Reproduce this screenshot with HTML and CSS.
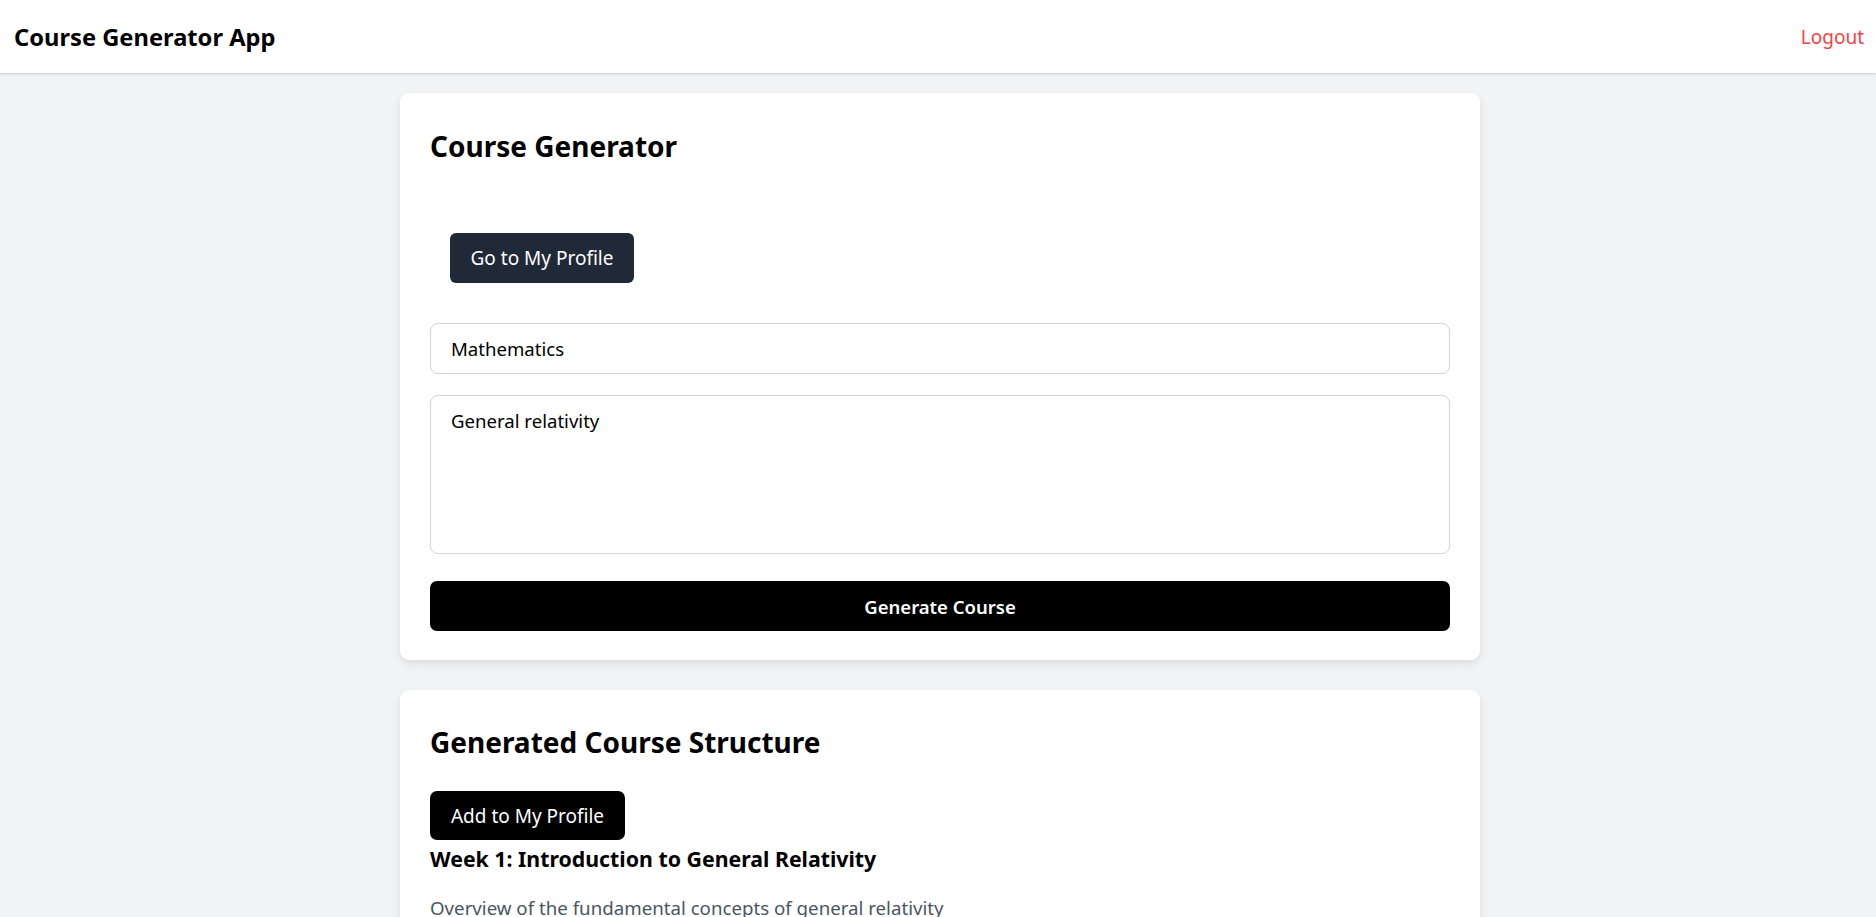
FILE: index.html
```html
<!DOCTYPE html>
<html lang="en">
<head>
<meta charset="utf-8">
<title>Course Generator App</title>
<link rel="stylesheet" href="styles.css">
</head>
<body>
<header class="topbar">
  <div class="brand">Course Generator App</div>
  <a class="logout" href="#">Logout</a>
</header>
<main class="main">
  <section class="card">
    <h2 class="card-title">Course Generator</h2>
    <div class="profile-row">
      <button class="btn btn-dark">Go to My Profile</button>
    </div>
    <input class="field" type="text" value="Mathematics">
    <textarea class="field area">General relativity</textarea>
    <button class="btn btn-black btn-wide">Generate Course</button>
  </section>
  <section class="card card-result">
    <h2 class="card-title">Generated Course Structure</h2>
    <button class="btn btn-black btn-add">Add to My Profile</button>
    <h3 class="week-title">Week 1: Introduction to General Relativity</h3>
    <p class="week-desc">Overview of the fundamental concepts of general relativity</p>
  </section>
</main>
</body>
</html>
```

FILE: styles.css
```css
* { box-sizing: border-box; }
html, body { margin: 0; padding: 0; }
body {
  background: #f3f4f6;
  font-family: "Noto Sans", "Open Sans", "Liberation Sans", sans-serif;
  color: #000;
  overflow: hidden;
  height: 917px;
}
.topbar {
  height: 73px;
  background: #fff;
  display: flex;
  align-items: center;
  justify-content: space-between;
  padding: 0 12px 0 14px;
  box-shadow: 0 1px 3px rgba(0,0,0,0.12), 0 1px 2px rgba(0,0,0,0.06);
  position: relative;
}
.brand {
  font-size: 23.7px;
  font-weight: 700;
}
.logout {
  color: #ef4444;
  text-decoration: none;
  font-size: 19px;
}
.main {
  width: 1084px;
  margin: 20px auto 0;
  padding-left: 4px;
}
.card {
  background: #fff;
  border-radius: 9px;
  box-shadow: 0 4px 12px rgba(0,0,0,0.08), 0 2px 4px rgba(0,0,0,0.04);
  padding: 33px 30px 29px 30px;
  display: flex;
  flex-direction: column;
  align-items: flex-start;
}
.card-title {
  margin: 0;
  font-size: 28px;
  line-height: 40px;
  font-weight: 700;
}
.profile-row {
  padding: 67px 0 0 20px;
}
.btn {
  border: none;
  font-family: inherit;
  font-size: 19px;
  height: 50px;
  border-radius: 6px;
  padding: 0 16px;
  color: #fff;
  cursor: pointer;
  white-space: nowrap;
}
.btn-dark { background: #1f2937; width: 184px; }
.btn-black { background: #000; }
.btn-wide {
  width: 100%;
  font-size: 18.5px;
  font-weight: 600;
  margin-top: 27px;
  border-radius: 7px;
}
.field {
  width: 100%;
  border: 1px solid #d1d5db;
  border-radius: 8px;
  font-family: inherit;
  font-size: 18.6px;
  color: #000;
  padding: 0 20px;
  background: #fff;
}
input.field {
  height: 51px;
  margin-top: 40px;
}
.area {
  height: 159px;
  margin-top: 21px;
  padding-top: 12px;
  resize: none;
  line-height: 26px;
}
.card-result {
  margin-top: 30px;
  padding-top: 32px;
}
.btn-add {
  margin-top: 29px;
  width: 195px;
  height: 49px;
  border-radius: 7px;
}
.week-title {
  margin: 4px 0 0;
  font-size: 21.3px;
  line-height: 30px;
  font-weight: 700;
}
.week-desc {
  margin: 21px 0 0;
  font-size: 18.7px;
  color: #4b5563;
}
```
